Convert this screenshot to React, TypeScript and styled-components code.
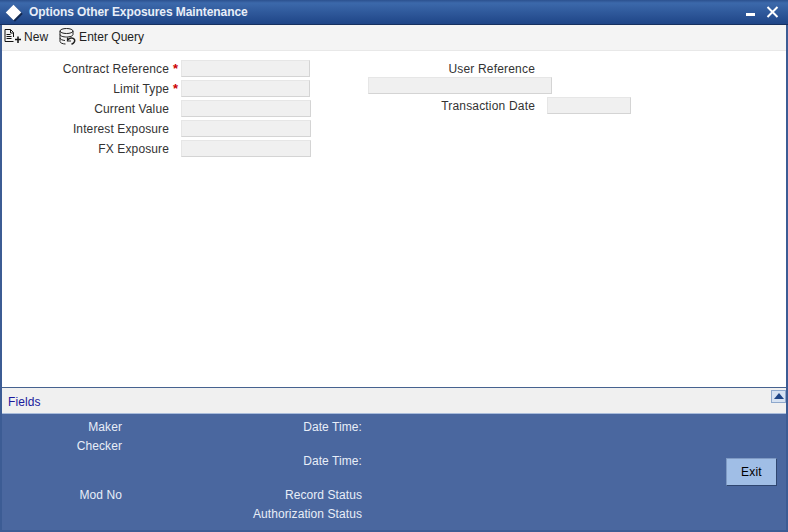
import React from 'react';
import styled, { createGlobalStyle } from 'styled-components';

const Global = createGlobalStyle`
	html, body {
		margin: 0;
		padding: 0;
		background: #3c5c94;
	}
	* {
		box-sizing: border-box;
	}
`

const leftFields = [
	{ label: 'Contract Reference', required: true, wide: false },
	{ label: 'Limit Type', required: true, wide: false },
	{ label: 'Current Value', required: false, wide: true },
	{ label: 'Interest Exposure', required: false, wide: true },
	{ label: 'FX Exposure', required: false, wide: true },
]

const NewIcon = () => (
	<svg width="17" height="15" viewBox="0 0 17 15" fill="none" stroke="#111" strokeWidth="1">
		<path d="M1 12.500V.5H6.500l3 3V8M9.500 12.500H1" />
		<path d="M6.500 .5V4h3" />
		<path d="M2.500 5.500h4M2.500 7.500h5M2.500 9.500h5" />
		<path d="M14 7.500v6.500M11 10.500h6" strokeWidth="1.500" />
	</svg>
)

const QueryIcon = () => (
	<svg width="17" height="17" viewBox="0 0 17 17" fill="none" stroke="#222" strokeWidth="1">
		<ellipse cx="7.500" cy="3" rx="6.500" ry="2.500" />
		<path d="M1 3v10.500c0 1.500 3 2.500 5.500 2.500M14 3v3.500" />
		<path d="M1 6.500c0 1.500 3 2.500 6.500 2.500s6.500-1 6.500-2.500M1 10c0 1.300 2.500 2.300 5 2.500" />
		<path d="M9 12c1-2.500 5-2.800 6.500-.5.800 1.800-.5 3.800-3 4.800" strokeWidth="1.500" />
		<path d="M8.500 9.500v3.500h3.500" strokeWidth="1.200" />
	</svg>
)

const App = () => {
	return (
		<Window>
			<Global />
			<TitleBar>
				<TitleDiamond />
				<Title>Options Other Exposures Maintenance</Title>
				<WindowButtons>
					<MinimizeMark />
					<svg width="13" height="12" viewBox="0 0 13 12" stroke="#fff" strokeWidth="2">
						<path d="M1.500 1 11.500 11M11.500 1 1.500 11" />
					</svg>
				</WindowButtons>
			</TitleBar>
			<Toolbar>
				<ToolButton><NewIcon />New</ToolButton>
				<ToolButton><QueryIcon />Enter Query</ToolButton>
			</Toolbar>
			<Content>
				<LeftColumn>
					{leftFields.map((f) => (
						<Row key={f.label}>
							<Label>{f.label}</Label>
							<Star>{f.required ? '*' : ''}</Star>
							<Input $wide={f.wide} />
						</Row>
					))}
				</LeftColumn>
				<RightColumn>
					<UserLabel>User Reference</UserLabel>
					<UserInput />
					<DateRow>
						<DateLabel>Transaction Date</DateLabel>
						<DateInput />
					</DateRow>
				</RightColumn>
			</Content>
			<FieldsBar>
				<FieldsLink>Fields</FieldsLink>
				<CollapseButton />
			</FieldsBar>
			<Footer>
				<AuditNames>
					<AuditText $top={3}>Maker</AuditText>
					<AuditText $top={4}>Checker</AuditText>
					<AuditText $top={34}>Mod No</AuditText>
				</AuditNames>
				<AuditStatus>
					<AuditText $top={3}>Date Time:</AuditText>
					<AuditText $top={19}>Date Time:</AuditText>
					<AuditText $top={19}>Record Status</AuditText>
					<AuditText $top={4}>Authorization Status</AuditText>
				</AuditStatus>
				<ExitButton>Exit</ExitButton>
			</Footer>
		</Window>
	);
};

export default App;

const Window = styled.div`
	width: 788px;
	height: 532px;
	display: flex;
	flex-direction: column;
	padding: 0 2px 2px;
	background: #3c5c94;
	font-family: "Liberation Sans", Arial, sans-serif;
	font-size: 12px;
	letter-spacing: 0.12px;
	color: #333;
	overflow: hidden;
`

const TitleBar = styled.div`
	height: 25px;
	margin: 0 -2px;
	padding: 0 9px 0 7px;
	display: flex;
	align-items: center;
	background: linear-gradient(#2c518f, #3c69ab 3px, #1f4587);
	border-bottom: 1px solid #16305f;
`

const TitleDiamond = styled.div`
	width: 11px;
	height: 11px;
	margin: 1px 10px 0 1px;
	background: #fff;
	box-shadow: 2px 0 0 #12284f;
	transform: rotate(45deg);
`

const Title = styled.div`
	flex: 1;
	color: #e8eef8;
	font-weight: bold;
	font-size: 12px;
	letter-spacing: -0.08px;
`

const WindowButtons = styled.div`
	display: flex;
	align-items: flex-start;
	gap: 11px;
`

const MinimizeMark = styled.div`
	width: 9px;
	height: 3px;
	margin-top: 7px;
	background: #fff;
`

const Toolbar = styled.div`
	height: 26px;
	padding: 0 0 2px 2px;
	display: flex;
	align-items: center;
	gap: 11px;
	background: #f4f4f4;
	border-bottom: 1px solid #e8e8e8;
	letter-spacing: 0.03px;
`

const ToolButton = styled.div`
	display: flex;
	align-items: center;
	gap: 3px;
	color: #222;
`

const Content = styled.div`
	flex: 1;
	padding-top: 9px;
	display: flex;
	background: #fff;
`

const LeftColumn = styled.div`
	width: 366px;
	display: flex;
	flex-direction: column;
	gap: 3px;
`

const Row = styled.div`
	height: 17px;
	display: flex;
	align-items: center;
`

const Label = styled.div`
	width: 167px;
	text-align: right;
`

const Star = styled.div`
	width: 12px;
	padding-left: 4px;
	color: #c00;
	font-weight: bold;
	font-size: 13px;
`

const Input = styled.div<{ $wide: boolean }>`
	width: ${(p) => (p.$wide ? 130 : 129)}px;
	height: 17px;
	background: #f0f0f0;
	border: 1px solid #e6e6e6;
	border-bottom-color: #d4d4d4;
	border-right-color: #d4d4d4;
`

const RightColumn = styled.div`
	display: flex;
	flex-direction: column;
	padding-top: 2px;
`

const UserLabel = styled.div`
	width: 167px;
	height: 15px;
	line-height: 15px;
	text-align: right;
	letter-spacing: 0.18px;
`

const UserInput = styled(Input).attrs({ $wide: true })`
	width: 184px;
`

const DateRow = styled.div`
	display: flex;
	align-items: flex-start;
	margin-top: 3px;
`

const DateLabel = styled(UserLabel)`
	margin-top: 2px;
`

const DateInput = styled(Input).attrs({ $wide: true })`
	width: 84px;
	margin-left: 12px;
`

const FieldsBar = styled.div`
	flex: none;
	height: 27px;
	padding: 3px 0 0 6px;
	display: flex;
	align-items: center;
	justify-content: space-between;
	background: #f0f0f0;
	border-top: 1px solid #46628f;
	border-bottom: 1px solid #a9bcdb;
`

const FieldsLink = styled.a`
	color: #1a1a9c;
	font-size: 12px;
`

const CollapseButton = styled.div`
	position: relative;
	align-self: flex-start;
	width: 15px;
	height: 13px;
	margin-top: -1px;
	background: #d6e2f2;
	border: 1px solid #8ea8cc;
	&::after {
		content: '';
		position: absolute;
		left: 2px;
		top: 2px;
		border-left: 5px solid transparent;
		border-right: 5px solid transparent;
		border-bottom: 6px solid #1f4587;
	}
`

const Footer = styled.div`
	flex: none;
	height: 116px;
	position: relative;
	display: flex;
	background: #4a679f;
	color: #e8eef8;
`

const AuditNames = styled.div`
	width: 120px;
	padding-top: 3px;
	display: flex;
	flex-direction: column;
	align-items: flex-end;
	letter-spacing: 0.08px;
`

const AuditStatus = styled(AuditNames)`
	width: 240px;
`

const AuditText = styled.div<{ $top: number }>`
	height: 15px;
	line-height: 15px;
	margin-top: ${(p) => p.$top}px;
`

const ExitButton = styled.div`
	position: absolute;
	right: 9px;
	top: 44px;
	width: 51px;
	height: 28px;
	display: flex;
	align-items: center;
	justify-content: center;
	background: #a0bee6;
	border: 1px solid #7f9ac4;
	border-right-color: #2f4670;
	border-bottom-color: #2f4670;
	color: #000;
	letter-spacing: 0.2px;
`
